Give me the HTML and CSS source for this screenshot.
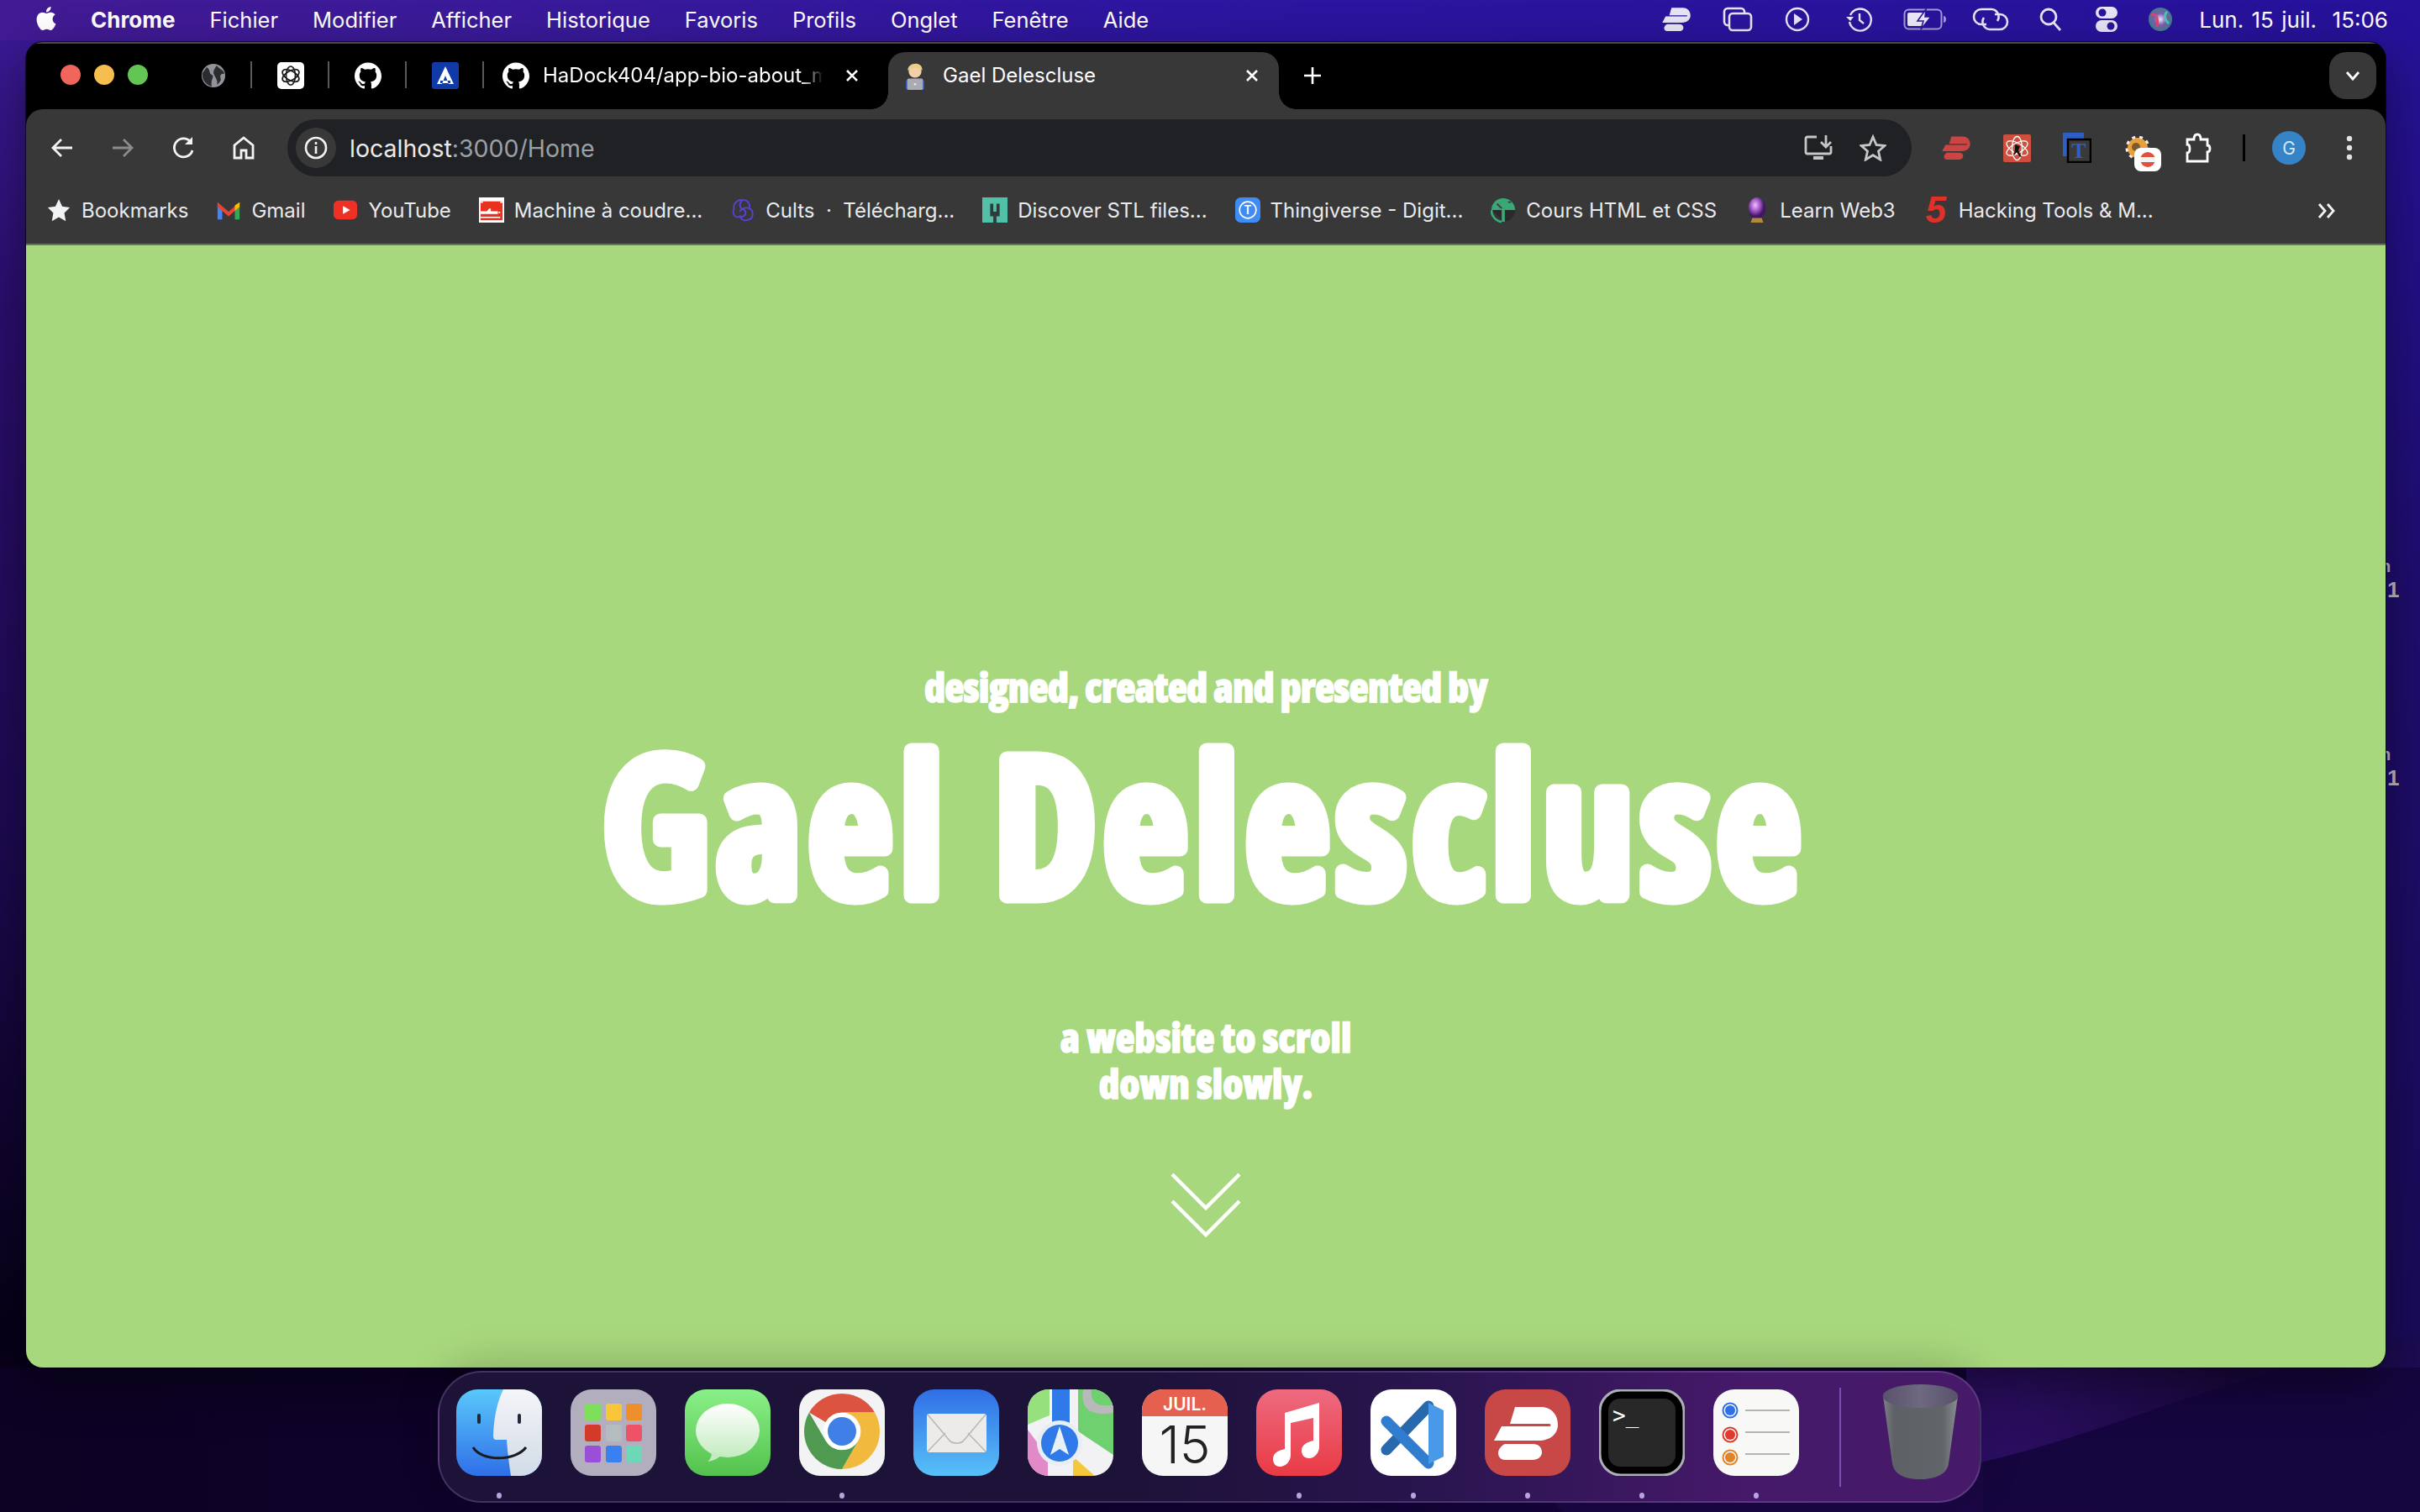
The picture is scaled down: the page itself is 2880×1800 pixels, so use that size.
FILE: index.html
```html
<!DOCTYPE html>
<html lang="fr">
<head>
<meta charset="utf-8">
<title>Gael Delescluse</title>
<link rel="stylesheet" href="styles.css">
</head>
<body>
<svg width="0" height="0" class="defs">
  <symbol id="gh" viewBox="0 0 24 24"><path d="M12 .297c-6.63 0-12 5.373-12 12 0 5.303 3.438 9.8 8.205 11.385.6.113.82-.258.82-.577 0-.285-.01-1.04-.015-2.04-3.338.724-4.042-1.61-4.042-1.61C4.422 18.07 3.633 17.7 3.633 17.7c-1.087-.744.084-.729.084-.729 1.205.084 1.838 1.236 1.838 1.236 1.07 1.835 2.809 1.305 3.495.998.108-.776.417-1.305.76-1.605-2.665-.3-5.466-1.332-5.466-5.93 0-1.31.465-2.38 1.235-3.22-.135-.303-.54-1.523.105-3.176 0 0 1.005-.322 3.3 1.23.96-.267 1.98-.399 3-.405 1.02.006 2.04.138 3 .405 2.28-1.552 3.285-1.23 3.285-1.23.645 1.653.24 2.873.12 3.176.765.84 1.23 1.91 1.23 3.22 0 4.61-2.805 5.625-5.475 5.92.42.36.81 1.096.81 2.22 0 1.606-.015 2.896-.015 3.286 0 .315.21.69.825.57C20.565 22.092 24 17.592 24 12.297c0-6.627-5.373-12-12-12" fill="currentColor"/></symbol>
  <symbol id="xvpn" viewBox="8 18 82 68"><path fill="currentColor" d="M36 21H67C80 21 87 31 87 42C87 53 78 61 64 61H11L20 44H77A1.500 1.500 0 0 0 77 41H30ZM24 65H57C64 65 68 69 68 75C68 80 63 84 57 84H24C19 84 16 80 16 76C16 71 20 67 24 65Z"/></symbol>
  <symbol id="close" viewBox="0 0 20 20"><path d="M4 4L16 16M16 4L4 16" stroke="currentColor" stroke-width="2.6" fill="none"/></symbol>
</svg>

<div class="desktop">
  <svg class="wallpaper" viewBox="0 0 2880 1800" preserveAspectRatio="none">
    <defs>
      <linearGradient id="wl" x1="0" y1="0" x2="0" y2="1"><stop offset="0" stop-color="#3c1a98"/><stop offset=".2" stop-color="#2c0e6e"/><stop offset=".55" stop-color="#1d0a52"/><stop offset=".88" stop-color="#070118"/><stop offset="1" stop-color="#0e0326"/></linearGradient>
      <linearGradient id="wr" x1="0" y1="0" x2="0" y2="1"><stop offset="0" stop-color="#26129a"/><stop offset=".4" stop-color="#1f0d6e"/><stop offset=".85" stop-color="#1b0b5a"/><stop offset="1" stop-color="#1b0b5a"/></linearGradient>
      <linearGradient id="wb" x1="0" y1="0" x2="1" y2="0"><stop offset="0" stop-color="#0c0224"/><stop offset=".45" stop-color="#0f0330"/><stop offset=".75" stop-color="#16053e"/><stop offset="1" stop-color="#150640"/></linearGradient>
      <linearGradient id="wc" x1="0" y1="0" x2="1" y2="0"><stop offset="0" stop-color="#2e0f66"/><stop offset=".6" stop-color="#1a0840"/><stop offset="1" stop-color="#1c0c54"/></linearGradient>
    </defs>
    <rect x="0" y="0" width="1440" height="1800" fill="url(#wl)"/>
    <rect x="1440" y="0" width="1440" height="1800" fill="url(#wr)"/>
    <rect x="0" y="1628" width="2880" height="172" fill="url(#wb)"/>
    <path d="M2340 1628H2880V1590C2780 1604 2700 1634 2586 1670C2500 1700 2420 1728 2340 1745Z" fill="url(#wc)"/>
    <path d="M1860 1800C1840 1780 1820 1760 1790 1745H2360V1800Z" fill="#1a0744"/>
  </svg>

  <div class="edge-label edge-a"><span class="edge-n">n</span><span class="edge-one">1</span></div>
  <div class="edge-label edge-b"><span class="edge-n">n</span><span class="edge-one">1</span></div>

  <header class="menubar">
    <nav class="menu-left">
      <svg class="apple" viewBox="0 0 24 24"><path fill="#fff" d="M12.152 6.896c-.948 0-2.415-1.078-3.96-1.04-2.04.027-3.91 1.183-4.961 3.014-2.117 3.675-.546 9.103 1.519 12.09 1.013 1.454 2.208 3.09 3.792 3.039 1.52-.065 2.09-.987 3.935-.987 1.831 0 2.35.987 3.96.948 1.637-.026 2.676-1.48 3.676-2.948 1.156-1.688 1.636-3.325 1.662-3.415-.039-.013-3.182-1.221-3.22-4.857-.026-3.04 2.48-4.494 2.597-4.559-1.429-2.09-3.623-2.324-4.39-2.376-2-.156-3.675 1.09-4.61 1.09zM15.53 3.83c.843-1.012 1.4-2.427 1.245-3.83-1.207.052-2.662.805-3.532 1.818-.78.896-1.454 2.338-1.273 3.714 1.338.104 2.715-.688 3.559-1.701"/></svg>
      <span class="menu-app">Chrome</span>
      <span>Fichier</span><span>Modifier</span><span>Afficher</span><span>Historique</span><span>Favoris</span><span>Profils</span><span>Onglet</span><span>Fenêtre</span><span>Aide</span>
    </nav>
    <div class="menu-right">
      <svg class="st-xvpn"><use href="#xvpn"/></svg>
      <svg width="36" height="30" viewBox="0 0 36 30" fill="none" stroke="#e8e6f6" stroke-width="2.6"><rect x="2" y="2" width="24" height="20" rx="4"/><rect x="8" y="8" width="26" height="20" rx="4" fill="#2b149c"/></svg>
      <svg width="30" height="30" viewBox="0 0 30 30" fill="none" stroke="#e8e6f6" stroke-width="2.4"><circle cx="15" cy="15" r="13"/><path d="M11 8L21 15L11 22Z" fill="#e8e6f6" stroke="none"/></svg>
      <svg width="32" height="30" viewBox="0 0 32 30" fill="none" stroke="#e8e6f6" stroke-width="2.4"><path d="M6 10A13 13 0 1 1 5 18"/><path d="M1 12L6 17L10 12" fill="#e8e6f6" stroke="none"/><path d="M17 8V16L22 20"/></svg>
      <svg width="52" height="26" viewBox="0 0 52 26" fill="none"><rect x="1.500" y="1.500" width="44" height="23" rx="5" stroke="#a69bd8" stroke-width="2"/><path d="M48 9v8c2 0 3-2 3-4s-1-4-3-4z" fill="#a69bd8"/><rect x="5" y="5" width="20" height="16" rx="2" fill="#eceaf8"/><path d="M27 1L17 15H24L21 25L33 10H26Z" fill="#eceaf8" stroke="#2b149c" stroke-width="1.600"/></svg>
      <svg width="44" height="28" viewBox="0 0 44 28" fill="none" stroke="#e8e6f6" stroke-width="2.6"><path d="M17 20H11A9 9 0 0 1 11 2H23A9 9 0 0 1 30 16"/><path d="M27 8H33A9 9 0 0 1 33 26H21A9 9 0 0 1 14 12"/></svg>
      <svg width="28" height="30" viewBox="0 0 28 30" fill="none" stroke="#e8e6f6" stroke-width="2.800"><circle cx="12" cy="12" r="9"/><path d="M18 19L26 28"/></svg>
      <svg width="26" height="32" viewBox="0 0 26 32"><rect x="0" y="1" width="26" height="14" rx="7" fill="#e8e6f6"/><circle cx="8" cy="8" r="4.500" fill="#2b149c"/><rect x="0" y="17" width="26" height="14" rx="7" fill="#e8e6f6"/><circle cx="18" cy="24" r="4.500" fill="#2b149c"/></svg>
      <svg width="28" height="30" viewBox="0 0 28 30"><defs><radialGradient id="siri"><stop offset="0" stop-color="#efe8ff"/><stop offset=".5" stop-color="#7f5fb0"/><stop offset="1" stop-color="#3f7f8f"/></radialGradient></defs><ellipse cx="14" cy="15" rx="14" ry="14" fill="url(#siri)"/><path d="M3 10C8 6 12 14 10 24" stroke="#d8477a" stroke-width="3" fill="none"/><path d="M22 6C16 12 22 18 24 20" stroke="#46c8b8" stroke-width="3" fill="none"/></svg>
      <span class="clock">Lun. 15 juil.&nbsp; 15:06</span>
    </div>
  </header>

  <main class="window">
    <div class="tabstrip">
      <div class="lights"><i class="red"></i><i class="yellow"></i><i class="green"></i></div>
      <div class="pin"><svg width="30" height="30" viewBox="0 0 30 30"><circle cx="15" cy="15" r="14" fill="#8f949a"/><path d="M7 5C12 8 9 12 13 14C17 16 11 20 13 28C6 26 1 20 2 12ZM19 3C21 7 28 8 28 13C24 12 22 15 24 20C22 24 20 25 19 26C21 20 16 16 15 12C15 8 17 6 19 3Z" fill="#2c2c2e"/></svg></div>
      <div class="pin"><svg width="32" height="32" viewBox="0 0 32 32"><rect width="32" height="32" rx="5" fill="#fff"/><g fill="none" stroke="#1a1a1a" stroke-width="1.700"><ellipse cx="16" cy="16" rx="5.500" ry="11"/><ellipse cx="16" cy="16" rx="5.500" ry="11" transform="rotate(60 16 16)"/><ellipse cx="16" cy="16" rx="5.500" ry="11" transform="rotate(120 16 16)"/></g></svg></div>
      <div class="pin"><svg class="ic-gh"><use href="#gh"/></svg></div>
      <div class="pin"><svg width="32" height="32" viewBox="0 0 32 32"><rect width="32" height="32" rx="3" fill="#0f3aa8"/><path d="M16 5L6 26H12L16 16L20 26H26ZM10 22H22V25H10Z" fill="#fff"/></svg></div>
      <div class="tab">
        <svg class="ic-gh"><use href="#gh"/></svg>
        <span class="tab-title">HaDock404/app-bio-about_me</span>
        <svg class="tab-x"><use href="#close"/></svg>
      </div>
      <div class="tab tab-active">
        <svg width="26" height="34" viewBox="0 0 30 40"><rect x="2" y="26" width="26" height="14" rx="3" fill="#2f55b8"/><circle cx="15" cy="14" r="9" fill="#f4d0a8"/><path d="M5 13C3 2 26 -2 25 13C21 8 12 8 5 13Z" fill="#e8cf88"/><rect x="4" y="24" width="22" height="16" rx="2" fill="#a8acb2"/><circle cx="15" cy="32" r="1.500" fill="#eee"/></svg>
        <span class="tab-title">Gael Delescluse</span>
        <svg class="tab-x"><use href="#close"/></svg>
      </div>
      <svg class="plus" viewBox="0 0 24 24"><path d="M12 2V22M2 12H22" stroke="#fff" stroke-width="2.600"/></svg>
      <div class="tabsearch"><svg width="20" height="14" viewBox="0 0 20 14"><path d="M3 3L10 11L17 3" stroke="#fff" stroke-width="2.800" fill="none"/></svg></div>
    </div>

    <div class="toolbar">
      <div class="tbtn"><svg width="28" height="28" viewBox="0 0 28 28" fill="none" stroke="#f1f3f4" stroke-width="2.800"><path d="M26 14H4M13 4L3 14L13 24"/></svg></div>
      <div class="tbtn"><svg width="28" height="28" viewBox="0 0 28 28" fill="none" stroke="#8a8b8d" stroke-width="2.800"><path d="M2 14H24M15 4L25 14L15 24"/></svg></div>
      <div class="tbtn"><svg width="26" height="28" viewBox="0 0 26 28" fill="none" stroke="#f1f3f4" stroke-width="2.800"><path d="M22 7A11 11 0 1 0 24 17"/><path d="M24 1V10H15" fill="#f1f3f4" stroke="none"/></svg></div>
      <div class="tbtn"><svg width="26" height="28" viewBox="0 0 26 28" fill="none" stroke="#f1f3f4" stroke-width="2.800"><path d="M2 26V11L13 2L24 11V26H16V17H10V26Z"/></svg></div>
      <div class="omnibox">
        <div class="info"><svg width="28" height="28" viewBox="0 0 28 28" fill="none" stroke="#f1f3f4" stroke-width="2.600"><circle cx="14" cy="14" r="12"/><path d="M14 12V21M14 7V10"/></svg></div>
        <span class="url">localhost<span class="url-dim">:3000/Home</span></span>
        <div class="omni-end">
          <svg width="34" height="32" viewBox="0 0 34 32" fill="none" stroke="#c4c7c5" stroke-width="2.800"><path d="M15 3H4A2 2 0 0 0 2 5V21A2 2 0 0 0 4 23H30A2 2 0 0 0 32 21V14"/><path d="M26 1V14M20 9L26 15L32 9"/><path d="M11 26H23V30H11Z" fill="#c4c7c5" stroke="none"/></svg>
          <svg width="32" height="32" viewBox="0 0 32 32" fill="none" stroke="#c4c7c5" stroke-width="2.800"><path d="M16 3L20 12.500L30 13.500L22.500 20L24.700 30L16 24.700L7.300 30L9.500 20L2 13.500L12 12.500Z"/></svg>
        </div>
      </div>
      <div class="extgap"></div>
      <div class="tbtn"><svg class="ext-xvpn"><use href="#xvpn"/></svg></div>
      <div class="tbtn"><svg width="33" height="33" viewBox="0 0 33 33"><rect width="33" height="33" rx="2" fill="#cf4f3f"/><g fill="none" stroke="#fff" stroke-width="1.300"><ellipse cx="16.500" cy="16.500" rx="6" ry="14"/><ellipse cx="16.500" cy="16.500" rx="6" ry="14" transform="rotate(60 16.500 16.500)"/><ellipse cx="16.500" cy="16.500" rx="6" ry="14" transform="rotate(120 16.500 16.500)"/></g><path d="M14 12L20 14L18 19L22 27L19 26L16 21L12 26L14 18Z" fill="#111"/></svg></div>
      <div class="tbtn"><svg width="34" height="36" viewBox="0 0 34 36"><rect x="0" y="0" width="25" height="28" fill="#2d5fc4"/><rect x="6" y="8" width="27" height="27" fill="#3a3a3a" stroke="#000" stroke-width="2.500"/><text x="19" y="30" class="ext-t">T</text></svg></div>
      <div class="tbtn">
        <svg width="32" height="30" viewBox="0 0 32 30"><circle cx="16" cy="15" r="12" fill="#e9a03a"/><circle cx="16" cy="15" r="13" fill="none" stroke="#f4f0e4" stroke-width="3" stroke-dasharray="4 5"/><circle cx="14" cy="14" r="5" fill="#7a5a30"/></svg>
        <div class="ext-badge"><i></i></div>
      </div>
      <div class="tbtn"><svg width="32" height="36" viewBox="0 0 32 36" fill="none" stroke="#fff" stroke-width="2.800"><path d="M3 8H11C11 3 13 2 15 2S19 3 19 8H27V15C31 15 31 23 27 23V34H3V24C7 24 7 14 3 14Z"/></svg></div>
      <div class="tsep"><i></i></div>
      <div class="tbtn"><div class="avatar">G</div></div>
      <div class="tbtn"><svg width="8" height="32" viewBox="0 0 8 32"><circle cx="4" cy="5" r="3.200" fill="#e3e3e3"/><circle cx="4" cy="16" r="3.200" fill="#e3e3e3"/><circle cx="4" cy="27" r="3.200" fill="#e3e3e3"/></svg></div>
    </div>

    <div class="bookmarks">
      <div class="bm"><svg class="fav" viewBox="0 0 32 32"><path d="M16 2L20.300 11.500L30 12.800L23 19.800L24.800 30L16 25L7.200 30L9 19.800L2 12.800L11.700 11.500Z" fill="#f1f3f4"/></svg><span>Bookmarks</span></div>
      <div class="bm"><svg class="fav" viewBox="0 0 32 32"><path d="M2 6V28H8V14Z" fill="#4285f4"/><path d="M30 6V28H24V14Z" fill="#34a853"/><path d="M2 6L16 18L30 6V12L16 24L2 12Z" fill="#ea4335"/><path d="M24 10L30 6V12L24 17Z" fill="#fbbc04"/></svg><span>Gmail</span></div>
      <div class="bm"><svg class="fav" viewBox="0 0 32 32"><rect x="1" y="4" width="30" height="24" rx="6" fill="#ee3124"/><path d="M13 11L22 16L13 21Z" fill="#fff"/></svg><span>YouTube</span></div>
      <div class="bm"><svg class="fav" viewBox="0 0 32 32"><rect width="32" height="32" fill="#fff"/><rect x="2" y="5" width="28" height="24" fill="#e8321f"/><path d="M2 21H24V17.500H15V14H13L10 17.500H2ZM2 24.500H27V26H2ZM25 18H27V20H25Z" fill="#fff"/><path d="M2 5H5V7H2ZM27 5H30V7H27Z" fill="#fff"/></svg><span>Machine à coudre...</span></div>
      <div class="bm"><svg class="fav" viewBox="0 0 32 32" fill="none" stroke="#5b3fd8" stroke-width="2"><path d="M16 3C22 3 26 8 24 14C30 16 30 26 24 28C18 31 14 28 12 24C6 28 2 20 5 14C3 8 10 2 16 3Z"/><path d="M16 3C10 8 12 14 18 16C22 20 18 26 12 24M24 14C20 12 14 14 12 18"/></svg><span class="cults">Cults &nbsp;·&nbsp; Télécharg...</span></div>
      <div class="bm"><svg class="fav" viewBox="0 0 32 32"><rect width="32" height="32" fill="#52bfa7"/><path d="M10 8H14V18H18V8H22V24H18V32H14V24H10Z" fill="#2f3a3a"/></svg><span>Discover STL files...</span></div>
      <div class="bm"><svg class="fav" viewBox="0 0 32 32"><rect width="32" height="32" rx="7" fill="#3f8cf5"/><circle cx="16" cy="16" r="10.500" fill="none" stroke="#fff" stroke-width="1.800"/><text x="16" y="21.500" class="fav-t">T</text></svg><span>Thingiverse - Digit...</span></div>
      <div class="bm"><svg class="fav" viewBox="0 0 32 32"><circle cx="16" cy="16" r="15" fill="#2a2a2a"/><path d="M16 1A15 15 0 0 1 31 16H18V31H14V16H1A15 15 0 0 1 16 1Z" fill="#3aa876"/><path d="M1 16A15 15 0 0 0 14 31" fill="none" stroke="#3aa876" stroke-width="3"/><path d="M8 8L14 14M22 6H26M4 20L12 28" stroke="#3a3a3a" stroke-width="2"/></svg><span>Cours HTML et CSS</span></div>
      <div class="bm"><svg class="fav" viewBox="0 0 32 32"><defs><radialGradient id="orb" cx=".4" cy=".35"><stop offset="0" stop-color="#f0c0ff"/><stop offset=".6" stop-color="#9a4fc0"/><stop offset="1" stop-color="#3e1a60"/></radialGradient></defs><ellipse cx="16" cy="14" rx="11" ry="14" fill="url(#orb)"/><path d="M10 26H22L24 32H8Z" fill="#b08a3a"/></svg><span>Learn Web3</span></div>
      <div class="bm bm-hack"><span class="fav-five">5</span><span>Hacking Tools &amp; M...</span></div>
      <svg class="bm-more" viewBox="0 0 24 22" fill="none" stroke="#f1f3f4" stroke-width="2.800"><path d="M3 3L10 11L3 19M13 3L20 11L13 19"/></svg>
    </div>

    <section class="hero">
      <p class="hero-sub">designed, created and presented by</p>
      <h1 class="hero-title"><svg class="title-svg" viewBox="0 0 1600 250"><text x="800" y="213">Gael Delescluse</text></svg></h1>
      <p class="hero-scroll">a website to scroll<br>down slowly.</p>
      <svg class="chevrons" width="84" height="78" viewBox="0 0 84 78" fill="none" stroke="#fff" stroke-width="4.500"><path d="M2 2L42 42L82 2"/><path d="M2 34L42 74L82 34"/></svg>
    </section>
  </main>

  <footer class="dock">
    <div class="dk on"><svg viewBox="0 0 102 103"><defs><linearGradient id="fa" x1="0" y1="0" x2="0" y2="1"><stop offset="0" stop-color="#5ac8fb"/><stop offset="1" stop-color="#2f6fe8"/></linearGradient><linearGradient id="fb" x1="0" y1="0" x2="0" y2="1"><stop offset="0" stop-color="#f4f5f7"/><stop offset="1" stop-color="#d2dbe8"/></linearGradient></defs><rect width="102" height="103" rx="25" fill="url(#fa)"/><path d="M56 0H77A25 25 0 0 1 102 25V78A25 25 0 0 1 77 103H65C63 90 61 75 60 60H47C44 60 44 56 44 54C45 30 50 12 56 0Z" fill="url(#fb)"/><rect x="25" y="29" width="4" height="12" rx="2" fill="#1e2a3a"/><rect x="73" y="29" width="4" height="12" rx="2" fill="#1e2a3a"/><path d="M20 69C30 86 70 86 83 69" fill="none" stroke="#1a1a22" stroke-width="3"/></svg></div>
    <div class="dk"><svg viewBox="0 0 102 103"><rect width="102" height="103" rx="25" fill="#b3aebd"/><rect x="17" y="17" width="19" height="20" rx="3" fill="#7ee05a"/><rect x="42" y="17" width="19" height="20" rx="3" fill="#f9c63a"/><rect x="66" y="17" width="19" height="20" rx="3" fill="#ee8e2c"/><rect x="17" y="42" width="19" height="20" rx="3" fill="#d43a2a"/><rect x="42" y="42" width="19" height="20" rx="3" fill="#b5bcc0"/><rect x="66" y="42" width="19" height="20" rx="3" fill="#ee5266"/><rect x="17" y="67" width="19" height="20" rx="3" fill="#9a4fd8"/><rect x="42" y="67" width="19" height="20" rx="3" fill="#3a80f0"/><rect x="66" y="67" width="19" height="20" rx="3" fill="#6cd8b8"/></svg></div>
    <div class="dk"><svg viewBox="0 0 102 103"><defs><linearGradient id="ma" x1="0" y1="0" x2="0" y2="1"><stop offset="0" stop-color="#8af088"/><stop offset="1" stop-color="#54c24e"/></linearGradient><linearGradient id="mb" x1="0" y1="0" x2="0" y2="1"><stop offset="0" stop-color="#fff"/><stop offset="1" stop-color="#c4ecc0"/></linearGradient></defs><rect width="102" height="103" rx="25" fill="url(#ma)"/><ellipse cx="51" cy="49" rx="38" ry="32" fill="url(#mb)"/><path d="M32 74C32 80 30 84 27 86C34 85 40 82 44 78Z" fill="#c4ecc0"/></svg></div>
    <div class="dk on"><svg viewBox="0 0 102 103"><rect width="102" height="103" rx="25" fill="#f3f3f4"/><path d="M12 27.500A45 45 0 0 1 90 27.500H51A22.500 22.500 0 0 0 31.500 39Z" fill="#dc5340"/><path d="M90 27.500A45 45 0 0 1 51 95L70.500 61A22.500 22.500 0 0 0 51 27.500Z" fill="#f2b93f"/><path d="M51 95A45 45 0 0 1 12 27.500L31.500 61A22.500 22.500 0 0 0 70.500 61Z" fill="#4f9a50"/><circle cx="51" cy="50" r="22" fill="#fff"/><circle cx="51" cy="50" r="17" fill="#3f7fe6"/></svg></div>
    <div class="dk"><svg viewBox="0 0 102 103"><defs><linearGradient id="mla" x1="0" y1="0" x2="0" y2="1"><stop offset="0" stop-color="#2f6fe6"/><stop offset="1" stop-color="#58c0f8"/></linearGradient></defs><rect width="102" height="103" rx="25" fill="url(#mla)"/><rect x="16" y="29" width="71" height="46" rx="3" fill="#ecebea"/><path d="M17 30L44 62C48 65 55 65 59 62L86 30M17 74L38 52M86 74L65 52" fill="none" stroke="#b8b8b8" stroke-width="1.600"/></svg></div>
    <div class="dk"><svg viewBox="0 0 102 103"><defs><clipPath id="mc"><rect width="102" height="103" rx="25"/></clipPath></defs><g clip-path="url(#mc)"><rect width="102" height="103" fill="#f2f2f4"/><path d="M60 0H102V78L60 50Z" fill="#6fd06f"/><path d="M0 0H28V30L0 42Z" fill="#96e07e"/><path d="M0 48L24 80V103H0Z" fill="#e28ac8"/><path d="M54 80L80 103H54Z" fill="#f5c83c"/><rect x="26" y="0" width="26" height="50" fill="#f8f8f8"/><rect x="29" y="0" width="21" height="50" fill="#2f7ae8"/><path d="M66 0C62 26 78 32 102 28V18C84 22 74 16 76 0Z" fill="#b9b9bb"/><circle cx="38" cy="64" r="27" fill="#e8eef4"/><circle cx="38" cy="64" r="22" fill="#2f7ae8"/><path d="M38 44L49 78L38 71L27 78Z" fill="#e8f0f8"/></g></svg></div>
    <div class="dk"><svg viewBox="0 0 102 103"><rect width="102" height="103" rx="25" fill="#f6f6f6"/><path d="M0 32V25A25 25 0 0 1 25 0H77A25 25 0 0 1 102 25V32Z" fill="#e5604f"/><text x="51" y="25" class="cal-m">JUIL.</text><text x="51" y="88" class="cal-d">15</text></svg></div>
    <div class="dk on"><svg viewBox="0 0 102 103"><defs><linearGradient id="mu" x1="0" y1="0" x2="0" y2="1"><stop offset="0" stop-color="#ee6a80"/><stop offset="1" stop-color="#e93a44"/></linearGradient></defs><rect width="102" height="103" rx="25" fill="url(#mu)"/><path d="M75 16V68C75 76 69 82 63 82C57 82 54 78 54 73C54 66 60 63 68 61V34L41 40V78C41 86 35 92 28 92C23 92 20 88 20 83C20 76 26 73 34 71V28Z" fill="#fff"/></svg></div>
    <div class="dk on"><svg viewBox="0 0 102 103"><rect width="102" height="103" rx="25" fill="#fff"/><path d="M19 72L69 20" stroke="#2868ad" stroke-width="13" stroke-linecap="round"/><path d="M19 38L69 88" stroke="#307cce" stroke-width="13" stroke-linecap="round"/><path d="M69 16L87 25V80L69 89V16Z" fill="#4899e8"/></svg></div>
    <div class="dk on"><svg viewBox="0 0 102 103"><rect width="102" height="103" rx="25" fill="#c84848"/><path fill="#fff" d="M36 21H67C80 21 87 31 87 42C87 53 78 61 64 61H11L20 44H77A1.500 1.500 0 0 0 77 41H30ZM24 65H57C64 65 68 69 68 75C68 80 63 84 57 84H24C19 84 16 80 16 76C16 71 20 67 24 65Z"/></svg></div>
    <div class="dk on"><svg viewBox="0 0 102 103"><rect x="1" y="1" width="100" height="101" rx="25" fill="#000" stroke="#aab0b4" stroke-width="3"/><rect x="11" y="11" width="80" height="81" rx="14" fill="#282828"/><text x="16" y="40" class="term">&gt;_</text></svg></div>
    <div class="dk on"><svg viewBox="0 0 102 103"><rect width="102" height="103" rx="25" fill="#f8f8f6"/><g fill="none" stroke-width="2"><circle cx="20" cy="25" r="8.500" stroke="#2f6fe8"/><circle cx="20" cy="54" r="8.500" stroke="#e03a2e"/><circle cx="20" cy="81" r="8.500" stroke="#e0842a"/></g><circle cx="20" cy="25" r="6" fill="#2f6fe8"/><circle cx="20" cy="54" r="6" fill="#e03a2e"/><circle cx="20" cy="81" r="6" fill="#e0842a"/><g stroke="#b4b4b4" stroke-width="2"><path d="M38 25H91M38 51H91M38 77H91"/></g></svg></div>
    <div class="dock-sep"></div>
    <svg class="trash" viewBox="0 0 91 113"><defs><linearGradient id="tb" x1="0" y1="0" x2="1" y2="0"><stop offset="0" stop-color="#7b8084"/><stop offset=".15" stop-color="#5d6166"/><stop offset=".8" stop-color="#60656a"/><stop offset="1" stop-color="#8a8e90"/></linearGradient><linearGradient id="tr" x1="0" y1="0" x2="1" y2="0"><stop offset="0" stop-color="#58526a"/><stop offset=".5" stop-color="#6e6880"/><stop offset="1" stop-color="#58526a"/></linearGradient></defs><path d="M1 14L12 94C14 108 28 113 45 113C62 113 77 108 79 94L90 14Z" fill="url(#tb)"/><ellipse cx="45.500" cy="14" rx="45" ry="14" fill="url(#tr)"/></svg>
  </footer>
</div>
</body>
</html>
```
FILE: styles.css
```css
* { box-sizing: border-box; }
html, body { margin: 0; padding: 0; width: 100%; height: 100%; overflow: hidden; background: #0c0224; }
body { font-family: Inter, "Liberation Sans", sans-serif; color: #fff; }
.defs { position: absolute; }
.desktop { position: relative; width: 2880px; height: 1800px; overflow: hidden; display: flex; flex-direction: column; }
.wallpaper { position: absolute; left: 0; top: 0; width: 2880px; height: 1800px; }
.edge-label { position: absolute; left: 2841px; color: #bdbbc6; font-family: "Liberation Sans", sans-serif; font-weight: 700; font-size: 26px; line-height: 1; display: flex; flex-direction: column; }
.edge-a { top: 664px; }
.edge-b { top: 888px; }
.edge-n { font-size: 20px; margin-left: -8px; height: 25px; }

.menubar { position: relative; height: 48px; flex: none; display: flex; justify-content: space-between; align-items: center; padding-bottom: 2px; background: linear-gradient(90deg, #431a94 0, #3a1a9a 20%, #2c15a0 50%, #26129a 100%); font-size: 25.500px; }
.menu-left { display: flex; align-items: center; gap: 41px; padding-left: 41px; }
.apple { width: 28px; height: 32px; margin-right: -2px; margin-top: -2px; }
.menu-app { font-weight: 700; font-size: 26px; }
.menu-right { display: grid; grid-template-columns: 74px 72px 70px 76px 81px 75px 68px 65px 64px auto; justify-items: center; align-items: center; padding-right: 38px; }
.st-xvpn { width: 38px; height: 30px; color: #e8e6f6; }
.clock { padding-left: 14px; justify-self: start; white-space: nowrap; font-size: 26px; word-spacing: 2px; }

.window { position: absolute; left: 31px; top: 50px; width: 2808px; height: 1578px; border-radius: 20px; overflow: hidden; background: #000; display: flex; flex-direction: column; box-shadow: 0 0 0 1px rgba(0,0,0,.6), 0 20px 60px rgba(0,0,0,.45); }
.tabstrip { height: 80px; flex: none; display: flex; align-items: flex-end; background: #000; border-top: 2px solid #4a4a4a; padding-left: 41px; position: relative; }
.lights { display: flex; gap: 16px; align-self: center; margin-top: -4px; width: 136px; }
.lights i { width: 24px; height: 24px; border-radius: 50%; display: block; }
.lights .red { background: #f0665a; }
.lights .yellow { background: #f6bd4f; }
.lights .green { background: #62c554; }
.pin { width: 92px; height: 34px; align-self: center; margin-top: -2px; display: flex; align-items: center; justify-content: center; position: relative; }
.pin::after { content: ""; position: absolute; right: 0; top: 0; width: 2px; height: 32px; background: #5a5a5a; }
.pin > svg { display: block; }
.ic-gh { width: 32px; height: 32px; color: #fff; }
.tab { width: 481px; height: 68px; display: flex; align-items: center; padding: 0 33px 13px 22px; flex: none; font-size: 24px; }
.tab-title { margin-left: 16px; flex: 1; overflow: hidden; white-space: nowrap; -webkit-mask-image: linear-gradient(90deg, #000 92%, transparent); mask-image: linear-gradient(90deg, #000 92%, transparent); }
.tab-x { width: 20px; height: 20px; color: #fff; flex: none; margin-left: 24px; }
.tab-active { width: 465px; background: #383838; border-radius: 20px 20px 0 0; position: relative; padding-left: 19px; padding-right: 22px; }
.tab-active .tab-title { mask-image: none; -webkit-mask-image: none; margin-left: 20px; }
.tab-active::before, .tab-active::after { content: ""; position: absolute; bottom: 0; width: 20px; height: 20px; }
.tab-active::before { left: -20px; background: radial-gradient(circle at 0 0, #000 19.5px, #383838 20px); }
.tab-active::after { right: -20px; background: radial-gradient(circle at 100% 0, #000 19.5px, #383838 20px); }
.plus { width: 24px; height: 24px; margin: 0 0 28px 28px; flex: none; position: relative; }
.tabsearch { position: absolute; right: 11px; top: 10px; width: 56px; height: 56px; border-radius: 20px; background: #383838; display: flex; align-items: center; justify-content: center; }

.toolbar { height: 80px; flex: none; background: #383838; border-radius: 20px 20px 0 0; display: flex; align-items: flex-start; padding: 12px 0 0 7px; position: relative; }
.tbtn { width: 72px; height: 68px; flex: none; display: flex; align-items: center; justify-content: center; position: relative; }
.omnibox { width: 1933px; height: 68px; flex: none; margin: 0 0 0 16px; background: #202124; border-radius: 34px; display: flex; align-items: center; padding: 0 30px 0 10px; }
.info { width: 48px; height: 48px; border-radius: 50%; background: #383838; display: flex; align-items: center; justify-content: center; flex: none; }
.url { margin-left: 16px; font-size: 28.500px; color: #e8eaed; white-space: nowrap; }
.url-dim { color: #9aa0a6; }
.omni-end { margin-left: auto; display: flex; gap: 32px; align-items: center; }
.extgap { width: 17px; flex: none; }
.ext-xvpn { width: 36px; height: 30px; color: #cc4545; }
.ext-t { font-family: "Liberation Serif", serif; font-weight: 700; font-size: 26px; text-anchor: middle; fill: #2d5fc4; }
.ext-badge { position: absolute; left: 32px; top: 34px; width: 32px; height: 28px; background: #fff; border-radius: 8px; display: flex; align-items: center; justify-content: center; }
.ext-badge i { width: 18px; height: 18px; border-radius: 50%; display: block; background-image: linear-gradient(#e0503f 36%, #f3f3f3 36%, #f3f3f3 64%, #e0503f 64%); }
.tsep { width: 36px; height: 68px; flex: none; display: flex; align-items: center; justify-content: center; }
.tsep i { width: 3px; height: 32px; background: #000; display: block; }
.avatar { width: 40px; height: 40px; border-radius: 50%; background: #3584c8; color: #d8e8f5; font-size: 21px; display: flex; align-items: center; justify-content: center; }

.bookmarks { height: 82px; flex: none; background: #383838; border-bottom: 2px solid #6c6e6b; display: flex; align-items: center; padding-left: 24px; gap: 33px; font-size: 24px; color: #e8eaed; position: relative; }
.bm { display: flex; align-items: center; gap: 12px; white-space: nowrap; }
.fav { width: 30px; height: 32px; flex: none; }
.fav-t { font-family: Inter, sans-serif; font-size: 15px; font-weight: 600; fill: #fff; text-anchor: middle; }
.fav-five { font-family: "Liberation Sans", sans-serif; font-weight: 700; font-style: italic; font-size: 44px; line-height: 32px; color: #e0302a; width: 30px; text-align: center; }
.bm-more { position: absolute; left: 2726px; top: 30px; width: 24px; height: 22px; }

.hero { flex: 1; background: #a8d87d; display: flex; flex-direction: column; align-items: center; padding-top: 491px; font-family: "Open Sans", "Noto Sans", sans-serif; font-weight: 800; font-stretch: 75%; color: #fff; }
.hero-sub, .hero-title, .hero-scroll { margin: 0; text-align: center; }
.hero-sub { font-size: 48px; line-height: 70px; letter-spacing: -.8px; -webkit-text-stroke: 1.500px #fff; white-space: nowrap; }
.hero-title { width: 1600px; height: 250px; flex: none; }
.title-svg { display: block; width: 1600px; height: 250px; }
.title-svg text { font-family: "Open Sans", "Noto Sans", sans-serif; font-weight: 600; font-stretch: 75%; font-size: 226px; letter-spacing: 10px; text-anchor: middle; fill: #fff; stroke: #fff; stroke-width: 19px; stroke-linejoin: round; }
.hero-scroll { font-size: 47px; line-height: 55px; margin-top: 105px; -webkit-text-stroke: 1.500px #fff; }
.chevrons { margin-top: 78px; flex: none; }

.dock { position: absolute; left: 521px; top: 1632px; width: 1837px; height: 157px; border-radius: 52px; display: flex; align-items: flex-start; padding: 20px 0 0 20px; gap: 34px; background: linear-gradient(90deg, #1d1238 0, #1d1238 45%, #2a1550 65%, #46196a 85%, #461a68 100%); border: 2px solid rgba(150,130,190,.3); box-shadow: 0 -8px 50px rgba(0,0,0,.2); }
.dk { width: 102px; height: 103px; flex: none; position: relative; }
.dk svg { display: block; width: 102px; height: 103px; }
.dk.on::after { content: ""; position: absolute; left: 48px; top: 123px; width: 6px; height: 7px; border-radius: 50%; background: #b9a4e0; }
.cal-m { font-family: Inter, sans-serif; font-weight: 600; font-size: 21px; fill: #fff; text-anchor: middle; }
.cal-d { font-family: Inter, sans-serif; font-weight: 300; font-size: 62px; fill: #222; text-anchor: middle; }
.term { font-family: "DejaVu Sans Mono", monospace; font-size: 26px; fill: #fff; }
.dock-sep { width: 2px; height: 118px; background: #7c4fae; flex: none; margin: -2px 0 0 14px; }
.trash { width: 91px; height: 113px; flex: none; margin: -6px 0 0 15px; }
```
